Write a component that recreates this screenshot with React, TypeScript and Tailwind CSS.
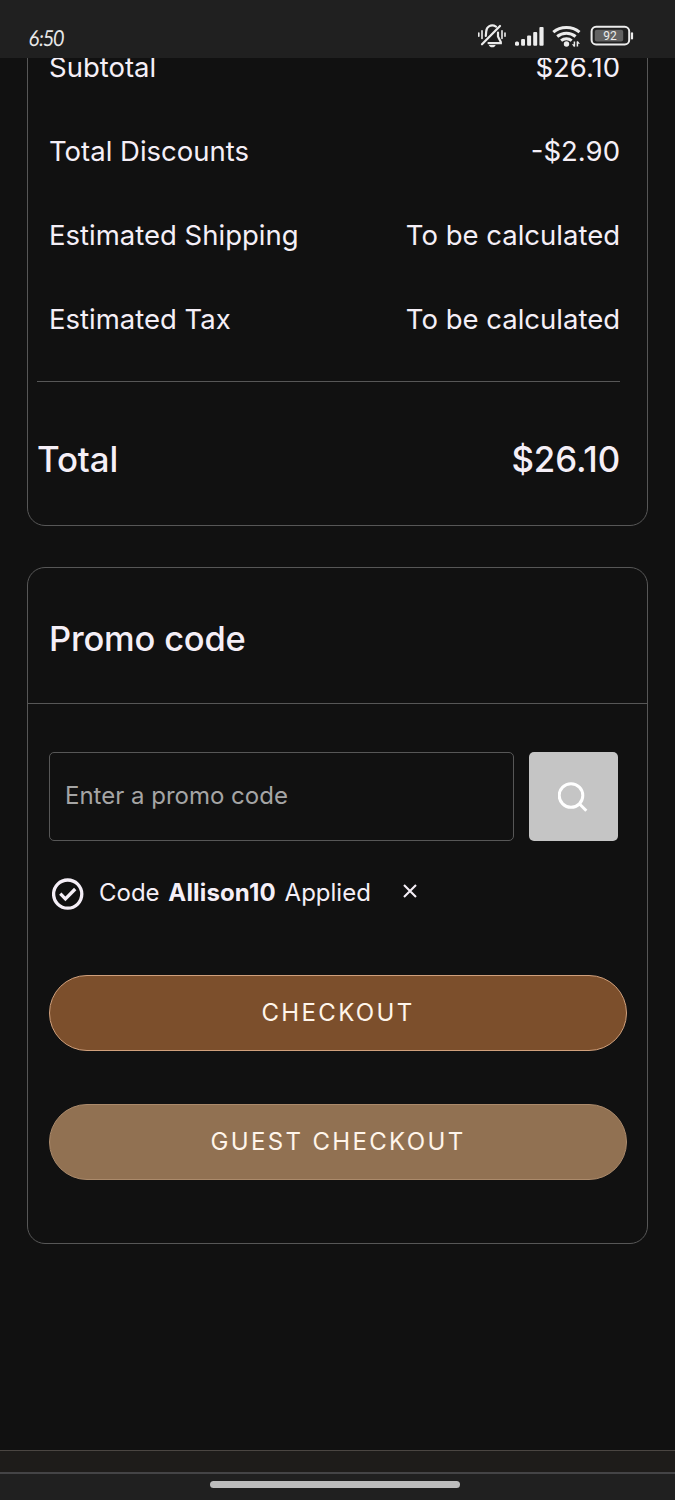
import { useState } from 'react';

const summaryRows = [
  { label: 'Subtotal', value: '$26.10' },
  { label: 'Total Discounts', value: '-$2.90' },
  { label: 'Estimated Shipping', value: 'To be calculated' },
  { label: 'Estimated Tax', value: 'To be calculated' },
];

function StatusBar() {
  return (
    <header className="relative z-10 flex h-[58px] shrink-0 items-start justify-between bg-[#202020] pl-[29px] pr-[39px] pt-[24px]">
      <span className="origin-left -skew-x-6 scale-x-[0.85] font-['Lato'] text-[22px] leading-[27px] tracking-[-0.7px] text-[#e8e8e8]">
        6:50
      </span>
      <svg width="158" height="26" viewBox="0 0 158 26" fill="none" className="text-[#ececec]">
        {/* muted bell */}
        <g stroke="currentColor" strokeWidth="2.2" strokeLinecap="round">
          <path d="M.8 9v3.2M4 6.8v7.6M24 6.8v7.6M27 9v3.2" strokeWidth="1.6" />
          <path d="M18 2.6C13-.6 8.4 3 8.2 7.6L7.8 12" />
          <path d="M20 8.5v4l2.8 5.6v1H10.5" />
          <path d="M22 2L4 20.3" />
        </g>
        <path d="M10.8 21h6.8c-.5 1.5-1.6 2.3-3.3 2.3s-2.9-.8-3.5-2.3z" fill="currentColor" />
        {/* signal */}
        <g fill="currentColor">
          <rect x="37" y="17.6" width="4" height="4.2" rx="1.5" />
          <rect x="43.1" y="15" width="3.9" height="6.8" rx="1" />
          <rect x="49.1" y="11.4" width="4" height="10.4" rx="1" />
          <rect x="55.2" y="8" width="4" height="13.8" rx="1" />
          <rect x="61.4" y="3" width="4.2" height="18.8" rx="1" />
        </g>
        {/* wifi */}
        <g stroke="currentColor" strokeWidth="3">
          <path d="M75.3 8.1c7.2-6.3 19-6.3 26.2 0" />
          <path d="M79.2 12.5c5.3-4.5 13.1-4.5 18.4 0" />
          <path d="M83.1 16.7c3-2.5 7.6-2.5 10.6 0" />
        </g>
        <circle cx="88.5" cy="20" r="2.7" fill="currentColor" />
        <path d="M96.4 17.5v5M99.4 17.5v5" stroke="currentColor" strokeWidth="1.5" />
        <path d="M93.8 20.3h2.6v3zM102 19.8h-2.6v-3z" fill="currentColor" />
        {/* battery */}
        <rect x="113.6" y="2.8" width="37.6" height="17.6" rx="4.5" stroke="currentColor" strokeWidth="2" />
        <rect x="116.8" y="5.8" width="28.4" height="11.6" rx="2" fill="#626262" />
        <path d="M154 9.4v5" stroke="currentColor" strokeWidth="2.2" strokeLinecap="round" />
        <text x="132" y="16" textAnchor="middle" fill="currentColor" className="font-['Roboto'] text-[12px]">
          92
        </text>
      </svg>
    </header>
  );
}

function OrderSummary() {
  return (
    <section className="-mt-8 h-[500px] shrink-0 rounded-[18px] border border-[#575757] pl-[9px] pr-[27px]">
      <dl className="-mt-px pl-[12px] text-[27.5px]">
        {summaryRows.map(row => (
          <div key={row.label} className="flex h-[84px] items-center justify-between">
            <dt>{row.label}</dt>
            <dd>{row.value}</dd>
          </div>
        ))}
      </dl>
      <div className="mt-[19px] flex h-[156px] items-center justify-between border-t border-[#575757] pb-px text-[34.8px] font-medium tracking-[-0.1px]">
        <span>Total</span>
        <span>$26.10</span>
      </div>
    </section>
  );
}

function PromoCode() {
  const [code, setCode] = useState('');
  const [applied, setApplied] = useState(true);

  return (
    <section className="mt-[41px] h-[677px] shrink-0 rounded-[18px] border border-[#575757]">
      <h2 className="flex h-[136px] items-center border-b border-[#575757] pl-[21px] pt-[6px] text-[34.5px] font-medium tracking-[-0.2px]">
        Promo code
      </h2>
      <div className="pl-[21px] pr-[20px] pt-[48px]">
        <div className="flex gap-[15px]">
          <input
            value={code}
            onChange={e => setCode(e.target.value)}
            placeholder="Enter a promo code"
            className="h-[89px] w-[465px] rounded-[5px] border border-[#575757] bg-transparent px-[15px] pb-[2px] text-[24px] placeholder:text-[#a5a5a5]"
          />
          <button aria-label="Apply" className="flex size-[89px] items-center justify-center rounded-[5px] bg-[#c5c5c5] text-white">
            <svg width="32" height="32" viewBox="0 0 32 32" fill="none" stroke="currentColor" strokeWidth="3">
              <circle cx="13" cy="14.5" r="11.8" />
              <path d="M21.3 22.8l7 7" />
            </svg>
          </button>
        </div>

        {applied && (
          <div className="mt-[32px] flex h-[40px] items-center text-[24px]">
            <svg width="32" height="32" viewBox="0 0 32 32" fill="none" stroke="currentColor" strokeWidth="3.3" className="ml-[3px] mt-[2px]">
              <circle cx="15.7" cy="16.1" r="14.1" />
              <path d="M8.3 15.7l5.1 5.1 9.8-9.8" />
            </svg>
            <p className="ml-[15px] [word-spacing:2px]">
              Code <strong className="font-bold tracking-[0.15px]">Allison10</strong> Applied
            </p>
            <button aria-label="Remove" onClick={() => setApplied(false)} className="-mt-[4px] ml-[32px]">
              <svg width="14" height="14" viewBox="0 0 14 14" stroke="currentColor" strokeWidth="2.1">
                <path d="M1 1l12 12M13 1L1 13" />
              </svg>
            </button>
          </div>
        )}

        <div className="mt-[62px] flex flex-col gap-[53px] text-[24px] tracking-[2.35px] text-[#fff5ea]">
          <button className="h-[76px] rounded-full border border-[#d0a07c] bg-[#7c4f2c]">CHECKOUT</button>
          <button className="h-[76px] rounded-full border border-[#ab8a6b] bg-[#917152]">GUEST CHECKOUT</button>
        </div>
      </div>
    </section>
  );
}

export default function App() {
  return (
    <div className="flex h-[1500px] w-[675px] flex-col overflow-hidden bg-[#111111] font-['Inter',sans-serif] text-[#f5eff7]">
      <StatusBar />
      <main className="flex flex-1 flex-col overflow-hidden px-[27px]">
        <OrderSummary />
        <PromoCode />
      </main>
      <div className="h-[22px] shrink-0 border-t border-[#4b4642] bg-[#1e1c1a]" />
      <footer className="flex h-[28px] shrink-0 justify-center border-t-2 border-[#444446] bg-[#202020] pr-[5px] pt-[7px]">
        <div className="h-[7px] w-[250px] rounded-full bg-[#bdbdbd]" />
      </footer>
    </div>
  );
}
